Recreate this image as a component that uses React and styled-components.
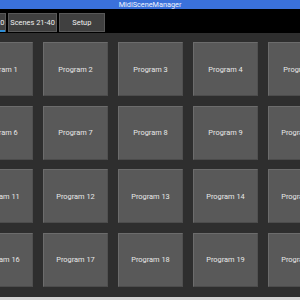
import React from 'react'
import styled, { createGlobalStyle } from 'styled-components'

const Global = createGlobalStyle`
	body {
		margin: 0;
		background: #000;
		font-family: Roboto, "Noto Sans", "DejaVu Sans", sans-serif;
	}
`

const Screen = styled.div`
	width: 300px;
	height: 300px;
	overflow: hidden;
	display: flex;
	flex-direction: column;
	background: #2e2e2e;
`

const TitleBar = styled.div`
	height: 9px;
	flex: none;
	background: #3a71db;
	color: #eef3ff;
	font-size: 7.3px;
	line-height: 10px;
	text-align: center;
	overflow: hidden;
`

const Toolbar = styled.div`
	height: 24px;
	flex: none;
	background: #000;
	display: flex;
	align-items: center;
	gap: 2px;
	margin-left: -38px;
	padding-top: 2px;
	box-sizing: border-box;
`

const Tab = styled.div`
	position: relative;
	height: 19px;
	min-width: ${p => p.$min || 0}px;
	padding: 0 1px;
	box-sizing: border-box;
	display: flex;
	align-items: center;
	justify-content: center;
	background: #404040;
	border: 1px solid #585858;
	color: #f0f0f0;
	font-size: 7.4px;
	white-space: nowrap;

	&::after {
		content: "";
		display: ${p => (p.$active ? 'block' : 'none')};
		position: absolute;
		left: 0;
		right: 0;
		bottom: -1px;
		height: 2px;
		background: #2f8fd8;
	}
`

const GridArea = styled.div`
	flex: 1;
	overflow: hidden;
	padding-top: 9px;
`

const Grid = styled.div`
	margin-left: -32px;
	display: grid;
	grid-template-columns: repeat(5, 65px);
	grid-auto-rows: 54px;
	column-gap: 10px;
	row-gap: 9.67px;
`

const ProgramButton = styled.div`
	box-sizing: border-box;
	background: #595959;
	border: 1px solid #6c6c6c;
	border-right-color: #505050;
	border-bottom-color: #4c4c4c;
	display: flex;
	align-items: center;
	justify-content: center;
	color: #e8e8e8;
	font-size: 7.4px;
`

const BottomStrip = styled.div`
	height: 3px;
	flex: none;
	background: #d4d4d4;
`

export default function App() {
	const programs = []
	for (let i = 1; i <= 20; i++) programs.push('Program ' + i)

	return (
		<Screen>
			<Global />
			<TitleBar>MidiSceneManager</TitleBar>
			<Toolbar>
				<Tab $active>Scenes 1-20</Tab>
				<Tab>Scenes 21-40</Tab>
				<Tab $min={46}>Setup</Tab>
			</Toolbar>
			<GridArea>
				<Grid>
					{programs.map(p => (
						<ProgramButton key={p}>{p}</ProgramButton>
					))}
				</Grid>
			</GridArea>
			<BottomStrip />
		</Screen>
	)
}
